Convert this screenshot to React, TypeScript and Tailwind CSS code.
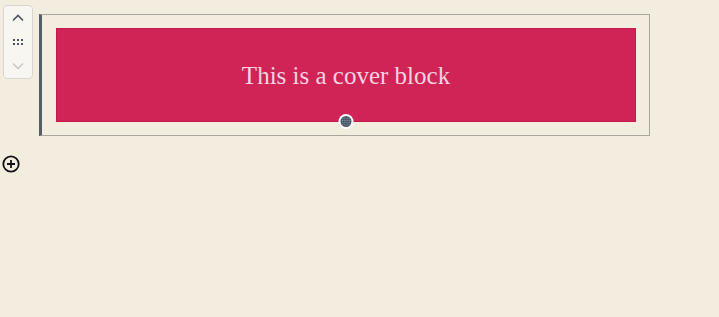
import React from "react";

export default function App() {
  return (
    <div className="relative w-full min-h-[317px] bg-[#f3ede0] pt-[14px]" style={{ fontFamily: '"Liberation Sans", sans-serif' }}>
      {/* floating block toolbar */}
      <div className="absolute left-[3px] top-[5px] w-[30px] h-[74px] rounded-[4px] border border-[#d9d6cf] bg-[#f8f6f1] flex flex-col items-center justify-between py-[6px]">
        <svg width="14" height="10" viewBox="0 0 14 10" className="mt-[1px]">
          <path d="M2 7.5 L7 2.5 L12 7.5" fill="none" stroke="#4b5560" strokeWidth="1.6" />
        </svg>
        <svg width="12" height="8" viewBox="0 0 12 8">
          {[0, 1].map((r) =>
            [0, 1, 2].map((c) => (
              <rect key={`${r}-${c}`} x={1 + c * 4} y={1 + r * 4} width="2" height="2" fill="#4b5560" />
            ))
          )}
        </svg>
        <svg width="14" height="10" viewBox="0 0 14 10" className="mb-[1px]">
          <path d="M2 2.5 L7 7.5 L12 2.5" fill="none" stroke="#c9c9c9" strokeWidth="1.6" />
        </svg>
      </div>

      {/* selected cover block */}
      <div className="ml-[39px] w-[611px] h-[122px] border border-[#a9a79f] border-l-[3px] border-l-[#555d66] pl-[14px] pr-[13px] pt-[13px] pb-[13px]">
        <div className="relative h-[94px] bg-[#d02356] flex items-center justify-center shadow-[inset_0_0_0_1px_#c01b4b]">
          <span className="text-[25px] text-[#f6d3e0] leading-none" style={{ fontFamily: '"Liberation Serif", serif' }}>
            This is a cover block
          </span>
          <div className="absolute left-1/2 -bottom-[7px] -translate-x-1/2 w-[15px] h-[15px] rounded-full bg-white flex items-center justify-center">
            <div className="w-[11px] h-[11px] rounded-full bg-[#4a5867] flex items-center justify-center">
              <svg width="9" height="9" viewBox="0 0 9 9">
                {[0, 1, 2, 3].map((r) =>
                  [0, 1, 2, 3].map((c) => (
                    <circle key={`${r}-${c}`} cx={1.2 + c * 2.2} cy={1.2 + r * 2.2} r="0.55" fill="#8ea0b0" />
                  ))
                )}
              </svg>
            </div>
          </div>
        </div>
      </div>

      {/* inserter */}
      <div className="ml-[2px] mt-[19px] w-[18px] h-[18px]">
        <svg width="18" height="18" viewBox="0 0 18 18">
          <circle cx="9" cy="9" r="7.7" fill="none" stroke="#111" strokeWidth="1.8" />
          <path d="M9 5 V13 M5 9 H13" stroke="#111" strokeWidth="1.8" />
        </svg>
      </div>
    </div>
  );
}
